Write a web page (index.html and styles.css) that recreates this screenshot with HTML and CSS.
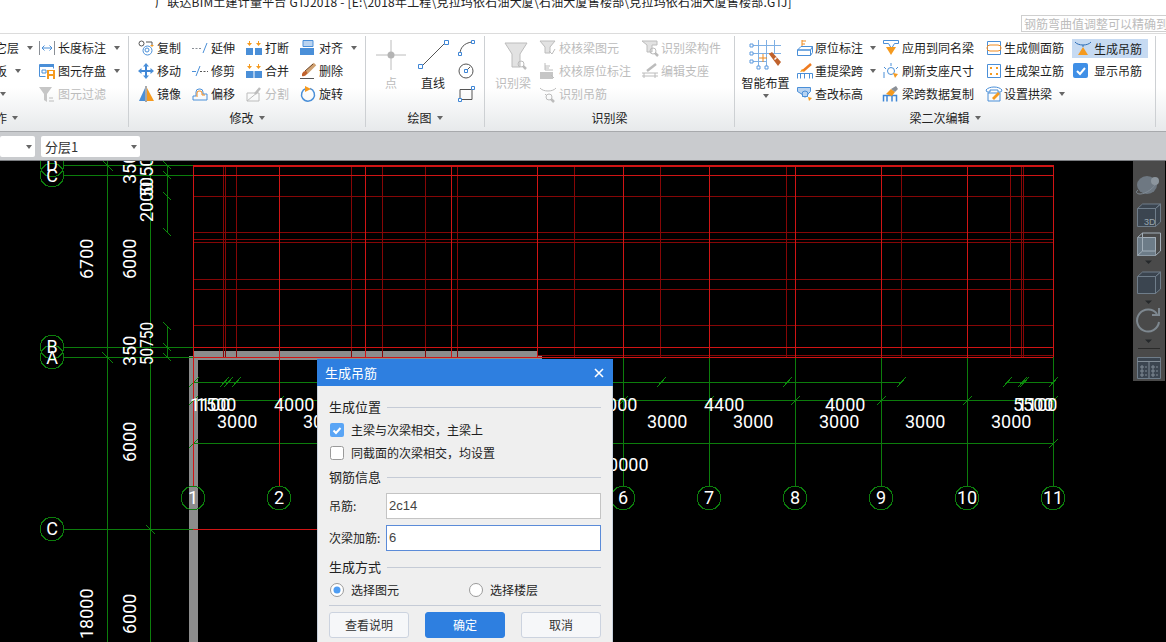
FILE: index.html
```html
<!DOCTYPE html>
<html lang="zh-CN">
<head>
<meta charset="utf-8">
<title>生成吊筋</title>
<link rel="stylesheet" href="styles.css">
</head>
<body>
<div class="app">
  <header class="titlebar">
    <div class="title">广联达BIM土建计量平台 GTJ2018 - [E:\2018年工程\克拉玛依石油大厦\石油大厦售楼部\克拉玛依石油大厦售楼部.GTJ]</div>
    <div class="search">钢筋弯曲值调整可以精确到何</div>
  </header>

  <div class="ribbon">
    <section class="group g0">
      <div class="body">
        <div class="col c0">
          <div class="item"><span>它层</span><i class="dd"></i></div>
          <div class="item"><span>板</span><i class="dd"></i></div>
          <div class="item"><i class="dd first"></i></div>
        </div>
        <div class="col">
          <div class="item"><svg class="ic" viewBox="0 0 16 16"><path class="lg" d="M.5 1v14M15.5 1v14"/><path class="lb" d="M3 8h10M5.5 5.5 3 8l2.500 2.500M10.500 5.500 13 8l-2.500 2.500"/></svg><span>长度标注</span><i class="dd"></i></div>
          <div class="item"><svg class="ic" viewBox="0 0 16 16"><path class="lb" d="M.5 1.500h14v4M.5 1.500v12h6"/><path class="fb" d="M1 1h14v3H1z"/><path class="lb" d="M3 7h4v3H3z"/><path class="fo" d="M8 7h8v9H8z"/><path class="fw" d="M10 8h4v3h-4zM10 13h4v3h-4z"/></svg><span>图元存盘</span><i class="dd"></i></div>
          <div class="item off"><svg class="ic" viewBox="0 0 16 16"><path class="fd" d="M0 1h13L8 8v8L5 14V8z"/><path class="ld" d="M10 12h4M10 15h5"/></svg><span>图元过滤</span></div>
        </div>
      </div>
      <div class="label"><span class="cut">作</span><i class="dd"></i></div>
    </section>

    <section class="group g1">
      <div class="body">
        <div class="col w54">
          <div class="item"><svg class="ic" viewBox="0 0 16 16"><circle class="ln" cx="3.500" cy="3.500" r="2.500"/><circle class="lb" cx="9.500" cy="10.500" r="4.500"/><circle class="lb" cx="9" cy="10" r="2"/><path class="ln" d="M8 2h6v3"/><path class="fo" d="M12 5h4l-2 2z"/></svg><span>复制</span></div>
          <div class="item"><svg class="ic" viewBox="0 0 16 16"><path class="lbb" d="M8 3v10M3 8h10"/><path class="fb" d="M8 0l3 3.500H5zM8 16l-3-3.500h6zM0 8l3.500-3v6zM16 8l-3.500 3V5z"/></svg><span>移动</span></div>
          <div class="item"><svg class="ic" viewBox="0 0 16 16"><path class="fb" d="M7 2v13H1z"/><path class="fo" d="M9 2v13h7z"/><path class="ln" d="M8 0v16"/></svg><span>镜像</span></div>
        </div>
        <div class="col w54">
          <div class="item"><svg class="ic" viewBox="0 0 16 16"><path class="lg dash" d="M0 8.500h9"/><path class="lb" d="M15 3l-4 10"/></svg><span>延伸</span></div>
          <div class="item"><svg class="ic" viewBox="0 0 16 16"><path class="lb" d="M0 8.500h4M8 3 4 13"/><path class="ln dash" d="M8 8.500h8"/></svg><span>修剪</span></div>
          <div class="item"><svg class="ic" viewBox="0 0 16 16"><path class="lb" d="M1 14V10h3V6a3 3 0 0 1 3-3h1a3 3 0 0 1 3 3v2h4v6z"/><path class="lo" d="M5 11V7a2 2 0 0 1 2-2h1a2 2 0 0 1 2 2v2h3"/></svg><span>偏移</span></div>
        </div>
        <div class="col w54">
          <div class="item"><svg class="ic" viewBox="0 0 16 16"><path class="fb" d="M0 8h7v7H0zM9 8h7v7H9z"/><path class="fo" d="M3 1h1v2h2L3.500 6 1 3h2zM12 1h1v2h2l-2.500 3L10 3h2z"/></svg><span>打断</span></div>
          <div class="item"><svg class="ic" viewBox="0 0 16 16"><path class="fb" d="M0 8h7.500v7H0zM8.500 8H16v7H8.500z"/><path class="fo" d="M3 1h1v2h2L3.500 6 1 3h2zM12 1h1v2h2l-2.500 3L10 3h2z"/></svg><span>合并</span></div>
          <div class="item off"><svg class="ic" viewBox="0 0 16 16"><path class="ld" d="M1 7h12v8H1zM1 15 12 6"/><path class="ldw" d="M9 8l5-6"/></svg><span>分割</span></div>
        </div>
        <div class="col">
          <div class="item"><svg class="ic" viewBox="0 0 16 16"><path class="lb fl" d="M3 .5h10v6H3z"/><path class="fb" d="M0 8h14v7H0z"/></svg><span>对齐</span><i class="dd"></i></div>
          <div class="item"><svg class="ic" viewBox="0 0 16 16"><path class="lbr" d="M15 1 6 10"/><path class="lbr2" d="M13 1 5 8"/><path class="fbr" d="M2 11c1-3 4-4 5-2s-2 5-5 4z"/><path class="ln" d="M0 15.500h14"/></svg><span>删除</span></div>
          <div class="item"><svg class="ic" viewBox="0 0 16 16"><path class="lbt" d="M6 2.500a6.500 6.500 0 1 0 4 0"/><path class="fo" d="M5 0l6 3-6 3z"/></svg><span>旋转</span></div>
        </div>
      </div>
      <div class="label"><span>修改</span><i class="dd"></i></div>
    </section>

    <section class="group g2">
      <div class="body">
        <div class="big b30 off">
          <svg class="ic30" viewBox="0 0 30 30"><path class="ld" d="M0 15h30M15 0v30"/><circle class="fd2" cx="15" cy="15" r="3.500"/></svg>
          <span>点</span>
        </div>
        <div class="big b30 m12">
          <svg class="ic30" viewBox="0 0 30 30"><path class="ln" d="M3 27 27 3"/><path class="sq" d="M.5 24.500h4v4h-4zM26.500 .5h4v4h-4z"/></svg>
          <span>直线</span>
        </div>
        <div class="col m10">
          <div class="item"><svg class="ic" viewBox="0 0 16 16"><path class="ln" d="M2 14C2 8 6 3 14 2"/><path class="sq" d="M.5 12.500h3v3h-3zM13.500 .5h3v3h-3z"/></svg></div>
          <div class="item"><svg class="ic" viewBox="0 0 16 16"><circle class="ln" cx="8" cy="8" r="7"/><path class="ln" d="M8 8l4-4"/><path class="sq" d="M6.500 6.500h3v3h-3z"/></svg></div>
          <div class="item"><svg class="ic" viewBox="0 0 16 16"><path class="ln" d="M2 3.500h12v10H2z"/><path class="sq" d="M.5 12.500h3v3h-3zM13.500 .5h3v3h-3z"/></svg></div>
        </div>
      </div>
      <div class="label"><span>绘图</span><i class="dd"></i></div>
    </section>

    <section class="group g3">
      <div class="body off">
        <div class="big b36">
          <svg class="ic30" viewBox="0 0 30 30"><path class="ld fh" d="M7 3h22l-7 11v13H14V14z"/><circle class="ld" cx="23" cy="24" r="3"/><path class="ldw" d="M25 26l3 3"/></svg>
          <span>识别梁</span>
        </div>
        <div class="col w102 m9">
          <div class="item"><svg class="ic" viewBox="0 0 16 16"><path class="ld fh" d="M0 1h15l-5 6v6H5V7z"/><path class="ld" d="M9 11l3 3 3-5"/></svg><span>校核梁图元</span></div>
          <div class="item"><svg class="ic" viewBox="0 0 16 16"><path class="ld" d="M5 0v7h8M5 3h5M5 5h4"/><path class="fd" d="M0 9h13v7H0z"/><path class="ld" d="M11 12l3 3"/></svg><span>校核原位标注</span></div>
          <div class="item"><svg class="ic" viewBox="0 0 16 16"><path class="ld" d="M0 2c3 4 13 4 16 0M5 8l2 2"/><circle class="ld" cx="9" cy="11" r="3"/><path class="ldw" d="M11 13l3 3"/></svg><span>识别吊筋</span></div>
        </div>
        <div class="col">
          <div class="item"><svg class="ic" viewBox="0 0 16 16"><path class="ld fh" d="M0 1h15v4h-5v7H5V5z"/><circle class="ld" cx="11" cy="11" r="3"/><path class="ldw" d="M13 13l3 3"/></svg><span>识别梁构件</span></div>
          <div class="item"><svg class="ic" viewBox="0 0 16 16"><path class="ldw" d="M5 8l9-7"/><path class="ld" d="M0 10h16M2 15v-5M13 15v-5M0 13h16"/></svg><span>编辑支座</span></div>
        </div>
      </div>
      <div class="label plain"><span>识别梁</span></div>
    </section>

    <section class="group g4">
      <div class="body">
        <div class="big b49">
          <svg class="ic30" viewBox="0 0 30 30"><path class="lbl" d="M0 5.500h30M0 13.500h30M0 21.500h16M7.500 0v29M15.500 0v29M23.500 0v14"/><path class="lbf" d="M-1 4h3v3h-3zM-1 12h3v3h-3zM-1 20h3v3h-3zM6 26h3v3H6zM14 26h3v3h-3z"/><path class="lo" d="M8 18h8M12 14v8M18 13l2 2"/><path class="fbr" d="M18 14l3-2 9 10-3 4z"/><path class="fw" d="M23 19l2-2 1 1-2 2z"/></svg>
          <span>智能布置</span>
          <i class="dd solo"></i>
        </div>
        <div class="col w86 m7 gap2">
          <div class="item"><svg class="ic" viewBox="0 0 16 16"><path class="lo" d="M5 0v6M5 1h4M5 4h3"/><path class="lb" d="M.5 10 4 6.500h11.500l-2 3.500zM.5 10h13v5.500H.5zM13.500 15.500l2-3V6.500"/></svg><span>原位标注</span><i class="dd"></i></div>
          <div class="item"><svg class="ic" viewBox="0 0 16 16"><path class="lob" d="M14 1 6 8"/><path class="lb" d="M.5 15.500v-5h15v5M3.500 15.500v-5M7.500 15.500v-5M12.500 15.500v-5"/><path class="fo" d="M3 9l2-3 3 2z"/></svg><span>重提梁跨</span><i class="dd"></i></div>
          <div class="item"><svg class="ic" viewBox="0 0 16 16"><path class="lb fl" d="M.5 1.500h13v4l-3 3v2h-5v-2l-5-3z"/><circle class="lb" cx="8" cy="8" r="3"/><path class="fo" d="M11 11l4 1-3 3z"/></svg><span>查改标高</span></div>
        </div>
        <div class="col w103">
          <div class="item"><svg class="ic" viewBox="0 0 16 16"><path class="lb" d="M.5 .5h15v3h-4l-3 5-3-5h-5z"/><path class="fo" d="M3 7h10l-5 8z"/></svg><span>应用到同名梁</span></div>
          <div class="item"><svg class="ic" viewBox="0 0 16 16"><circle class="lb" cx="8" cy="8" r="3.500"/><path class="lb" d="M8 0v3M1 4l2 2M15 4l-2 2M1 9v6"/><path class="fo" d="M10 10l5 1-3 4z"/></svg><span>刷新支座尺寸</span></div>
          <div class="item"><svg class="ic" viewBox="0 0 16 16"><path class="lbw" d="M.5 15.500v-6h13v6M4 15.500v-6M9 15.500v-6"/><path class="fo" d="M3 8l5-5 4 3-3 4z"/><path class="fg" d="M8 3l5-3 2 3-3 3z"/></svg><span>梁跨数据复制</span></div>
        </div>
        <div class="col w86 gap2">
          <div class="item"><svg class="ic" viewBox="0 0 16 16"><path class="lb" d="M1.500 1.500h13v13h-13z"/><path class="lo" d="M4 5h8M4 11h8M4 5a3 3 0 0 0 0 6M12 5a3 3 0 0 1 0 6"/></svg><span>生成侧面筋</span></div>
          <div class="item"><svg class="ic" viewBox="0 0 16 16"><path class="lb" d="M1.500 1.500h13v13h-13z"/><path class="fo" d="M4 4h2v2H4zM10 4h2v2h-2zM4 10h2v2H4zM10 10h2v2h-2z"/></svg><span>生成架立筋</span></div>
          <div class="item"><svg class="ic" viewBox="0 0 16 16"><path class="lb" d="M0 4c3-4 13-4 16 0l-1 2h-3V4H4v2H1zM2 7h12v8H2z"/><path class="fo" d="M6 12l6-6 2 2-6 6z"/></svg><span>设置拱梁</span><i class="dd"></i></div>
        </div>
        <div class="col">
          <div class="item hl"><svg class="ic" viewBox="0 0 16 16"><path class="lbd" d="M0 1c3 4 13 4 16 0"/><path class="fo" d="M3 14h10l-5-8z"/><path class="lbd" d="M8 4v2"/></svg><span>生成吊筋</span></div>
          <div class="item chk"><svg class="ic" viewBox="0 0 16 16"><rect class="fb2" width="15" height="15" rx="2"/><path class="tick" d="M4 8l3 3 5-6"/></svg><span>显示吊筋</span></div>
        </div>
      </div>
      <div class="label"><span>梁二次编辑</span><i class="dd"></i></div>
    </section>
  </div>

  <div class="subbar">
    <div class="select s1"><i class="dd"></i></div>
    <div class="select s2"><span>分层1</span><i class="dd"></i></div>
  </div>

  <main class="canvas">
    <svg class="cad" viewBox="0 161 1166 481" aria-hidden="false">
      <defs>
        <polygon id="axis" points="12,0 10.400,6 6,10.400 0,12 -6,10.400 -10.400,6 -12,0 -10.400,-6 -6,-10.400 0,-12 6,-10.400 10.400,-6"/>
      </defs>
      <path class="wall" d="M193 351h344v5h5v4H198v282h-9V356h4z"/>
      <path class="gr" d="M64 165.500h129M64 175.500h129M64 347.500h129M64 357.500h129M64 529.500h129M107.500 161v481M150.500 161v481M167.500 165v67M167.500 326v31M193 382.500h709M1007 382.500h46M193 400.500h860M193 443.500h860M623.500 357v129M709.500 357v129M795.500 357v129M881.500 357v129M967.500 357v129M1053.500 357v129"/>
      <path class="tk" d="M102 160l11 11M102 352l11 11M146 525l9 9M163 161l8 8M163 171l8 8M163 192l8 8M163 228l8 8M163 322l8 8M163 343l8 8M163 353l8 8M189 387l10-10M220 387l9-10M224 387l9-10M232 387l9-10M189 405l9-9M275 405l9-9M619 405l9-9M705 405l9-9M791 405l9-9M877 405l9-9M963 405l9-9M1049 405l9-9M189 448l9-9M1049 448l9-9M657 387l9-10M783 387l9-10M897 387l9-10M1003 387l9-10M1018 387l9-10M1020 387l9-10M1049 387l9-10"/>
      <path class="rd2" d="M193 196.500h860M193 232.500h860M193 239.500h860M193 242.500h860M193 279.500h860M193 289.500h860M193 325.500h860M537 355.500h516M223.500 165v192M225.500 165v192M236.500 165v192M351.500 165v192M382.500 165v192M425.500 165v192M457.500 165v192M574.500 165v192M660.500 165v192M786.500 165v192M901.500 165v192M1010.500 165v192M1021.500 165v192M1023.500 165v192"/>
      <path class="rd" d="M193 165.500h860M193 166.500h860M193 175.500h860M193 347.500h860M193 357.500h860M193.500 165v321M279.500 165v321M365.500 165v192M451.500 165v192M537.500 165v192M623.500 165v192M709.500 165v192M795.500 165v192M881.500 165v192M967.500 165v192M1053.500 165v192M193 529.500h125"/>
      <g class="cg">
        <use href="#axis" x="52" y="165"/><use href="#axis" x="52" y="175"/>
        <use href="#axis" x="52" y="347"/><use href="#axis" x="52" y="357"/>
        <use href="#axis" x="52" y="529"/>
        <use href="#axis" x="193" y="498"/><use href="#axis" x="279" y="498"/>
        <use href="#axis" x="623" y="498"/><use href="#axis" x="709" y="498"/><use href="#axis" x="795" y="498"/>
        <use href="#axis" x="881" y="498"/><use href="#axis" x="967" y="498"/><use href="#axis" x="1053" y="498"/>
      </g>
      <g class="mark">
        <text x="52" y="171">D</text><text x="52" y="182">C</text>
        <text x="52" y="353">B</text><text x="52" y="364">A</text>
        <text x="52" y="535">C</text>
        <text x="193" y="504">1</text><text x="279" y="504">2</text><text x="623" y="504">6</text>
        <text x="709" y="504">7</text><text x="795" y="504">8</text><text x="881" y="504">9</text>
        <text x="967" y="504">10</text><text x="1053" y="504">11</text>
      </g>
      <g class="dim">
        <text x="190" y="411">1100</text><text x="196" y="411">1500</text><text x="274" y="411">4000</text>
        <text x="597" y="411">4000</text><text x="704" y="411">4400</text><text x="825" y="411">4000</text>
        <text x="1013" y="411">5500</text><text x="1017" y="411">1100</text>
        <text x="217" y="428">3000</text><text x="303" y="428">3000</text><text x="647" y="428">3000</text>
        <text x="733" y="428">3000</text><text x="819" y="428">3000</text><text x="905" y="428">3000</text><text x="991" y="428">3000</text>
        <text x="598" y="471">30000</text>
      </g>
      <g class="dim">
        <text transform="translate(93 279) rotate(-90)">6700</text>
        <text transform="translate(136 279) rotate(-90)">6000</text>
        <text transform="translate(136 184) rotate(-90)">350</text>
        <text transform="translate(153 222) rotate(-90)">2000</text>
        <text transform="translate(153 197) rotate(-90)">5050</text>
        <text transform="translate(136 366) rotate(-90)">350</text>
        <text transform="translate(153 365) rotate(-90)" textLength="43" lengthAdjust="spacingAndGlyphs">50750</text>
        <text transform="translate(136 462) rotate(-90)">6000</text>
        <text transform="translate(93 639) rotate(-90)">18000</text>
        <text transform="translate(136 634) rotate(-90)">6000</text>
      </g>
    </svg>

    <aside class="viewbar">
      <svg class="viewicons" viewBox="1133 161 32 220">
        <ellipse class="ph" cx="1147" cy="185" rx="10" ry="9"/>
        <path class="ps" d="M1138 190c-3 2-1 4 2 4 6 0 14-6 18-13"/>
        <circle class="ph2" cx="1155" cy="181" r="4"/>
        <path class="pf" d="M1137.500 208.500h18v18h-18zM1137.500 208.500l5-4.500h18l-5 4.500zM1155.500 208.500l5-4.500v18l-5 4.500z"/>
        <text class="p3d" x="1144" y="225">3D</text>
        <path class="pm" d="M1137.500 237.500h18v18h-18z"/>
        <path class="pl" d="M1142.500 237.500h13v13.500h-13zM1137.500 237.500l5-4.500h18v18l-5 4.500M1142.500 233v4M1142.500 251l-5 4.500"/>
        <path class="pa" d="M1145 260.500h7l-3.500 3.500z"/>
        <path class="pf" d="M1137.500 276.500h18v17h-18zM1137.500 276.500l5-4.500h18l-5 4.500zM1155.500 276.500l5-4.500v17l-5 4.500z"/>
        <path class="pa" d="M1145 300.500h7l-3.500 3.500z"/>
        <path class="ps2" d="M1157 314a11 11 0 1 0 2 8M1152 315h7v-7"/>
        <path class="pa" d="M1145 339.500h7l-3.500 3.500z"/>
        <path class="sep" d="M1138 348.500h22"/>
        <path class="pf" d="M1137.500 357.500h23v21h-23z"/>
        <path class="ps" d="M1137.500 361.500h23M1149 362v16M1141 366h2v2h-2zM1145 367h2M1141 370h2v2h-2zM1145 371h2M1141 374h2v2h-2zM1145 375h2M1152 366h2v2h-2zM1156 367h2M1152 370h2v2h-2zM1156 371h2M1152 374h2v2h-2zM1156 375h2"/>
      </svg>
    </aside>
  </main>

  <div class="dialog">
    <div class="dlg-head"><span>生成吊筋</span><svg class="close" viewBox="0 0 10 10"><path d="M1 1l8 8M9 1l-8 8"/></svg></div>
    <div class="dlg-body">
      <div class="legend"><span>生成位置</span><i></i></div>
      <div class="opt"><svg class="box" viewBox="0 0 14 14"><rect class="boxon" width="14" height="14" rx="2"/><path class="tick" d="M3.500 7.500l2.500 2.500 4.500-5"/></svg><span>主梁与次梁相交，主梁上</span></div>
      <div class="opt"><svg class="box" viewBox="0 0 14 14"><rect class="boxoff" x=".5" y=".5" width="13" height="13" rx="2"/></svg><span>同截面的次梁相交，均设置</span></div>
      <div class="legend l2"><span>钢筋信息</span><i></i></div>
      <div class="field"><label>吊筋:</label><div class="input">2c14</div></div>
      <div class="field"><label>次梁加筋:</label><div class="input focus">6</div></div>
      <div class="legend l3"><span>生成方式</span><i></i></div>
      <div class="radios">
        <div class="radio r1"><svg class="box" viewBox="0 0 14 14"><circle class="boxoff" cx="7" cy="7" r="6.500"/><circle class="dot" cx="7" cy="7" r="3.500"/></svg><span>选择图元</span></div>
        <div class="radio"><svg class="box" viewBox="0 0 14 14"><circle class="boxoff" cx="7" cy="7" r="6.500"/></svg><span>选择楼层</span></div>
      </div>
      <div class="rule"></div>
      <div class="buttons">
        <div class="btn">查看说明</div>
        <div class="btn primary">确定</div>
        <div class="btn">取消</div>
      </div>
    </div>
  </div>
</div>
</body>
</html>
```

FILE: styles.css
```css
* { box-sizing: border-box; }
html, body { margin: 0; padding: 0; background: #000; overflow: hidden; }
body, .app { width: 1166px; height: 642px; }
.app {
  position: relative;
  display: flex;
  flex-direction: column;
  overflow: hidden;
  font: 12px/16px "Noto Sans CJK SC", "Noto Sans", sans-serif;
  color: #1e1e1e;
}

/* title */
.titlebar { height: 33px; background: #fff; position: relative; flex: none; }
.title { padding-left: 155px; margin-top: -6px; line-height: 16px; white-space: nowrap; color: #222; letter-spacing: .2px; }
.search {
  position: absolute; left: 1021px; top: 15px; width: 160px; height: 17px;
  border: 1px solid #cfcfcf; color: #bcbcbc; padding-left: 2px; line-height: 15px; white-space: nowrap;
}

/* ribbon */
.ribbon {
  flex: none; height: 98px; display: flex;
  border-top: 1px solid #dcdcdc;
  background: linear-gradient(#fff 0, #fff 55%, #e7e9eb 100%);
}
.group { height: 91px; margin-top: 2px; border-right: 1px solid #cdd0d3; flex: none; display: flex; flex-direction: column; }
.g0 { width: 129px; }
.g1 { width: 237px; }
.g2 { width: 119px; }
.g3 { width: 250px; }
.g4 { width: 421px; }
.body { height: 70px; display: flex; }
.g1 .body { padding-left: 9px; }
.g2 .body { padding-left: 10px; }
.g3 .body { padding-left: 10px; }
.g4 .body { padding-left: 6px; }
.label { flex: 1; padding-top: 3px; display: flex; justify-content: center; align-items: center; height: 21px; color: #222; }
.g0 .label { justify-content: flex-start; margin-left: -5px; }
.col { display: grid; grid-template-rows: repeat(3, 23px); flex: none; }
.c0 { margin-left: -5px; width: 44px; }
.w54 { width: 54px; }
.w86 { width: 86px; }
.w102 { width: 102px; }
.w103 { width: 103px; }
.m7 { margin-left: 7px; }
.m9 { margin-left: 9px; }
.m10 { margin-left: 10px; }
.m12 { margin-left: 12px; }
.item { display: flex; align-items: center; gap: 3px; white-space: nowrap; height: 23px; }
.gap2 .item { gap: 2px; }
.off, .off .item { color: #bcbcbc; }
.ic { width: 16px; height: 16px; flex: none; overflow: visible; }
.ic30 { width: 30px; height: 30px; flex: none; overflow: visible; }
.big { display: flex; flex-direction: column; align-items: center; padding-top: 4px; flex: none; white-space: nowrap; }
.big span { margin-top: 5px; }
.b30 { width: 30px; }
.b36 { width: 36px; }
.b49 { width: 49px; }
.hl { background: #c6daf2; height: 19px; margin-top: 3px; width: 76px; padding-left: 3px; }
.chk { padding-left: 1px; gap: 5px; }
.dd {
  display: inline-block; width: 0; height: 0; flex: none; margin-left: 5px;
  border-top: 4px solid #666; border-left: 3.500px solid transparent; border-right: 3.500px solid transparent;
}
.dd.first { margin-left: 6px; }
.dd.solo { margin: 3px 0 0; }
.item .dd { margin-left: 5px; }

/* icon paints */
.ln, .lb, .lg, .lo, .ld, .ldw, .lbb, .lbr, .lbr2, .lbt, .lob, .lbw, .lbd, .lbl, .sq, .tick { fill: none; stroke-width: 1; }
.ln { stroke: #555; }
.lb { stroke: #4a8fd8; }
.lbb { stroke: #3f86d6; stroke-width: 2; }
.lbl { stroke: #7fb0e4; }
.lbf { fill: #fff; stroke: #5c9adf; stroke-width: 1; }
.lbd { stroke: #2f6eb5; }
.lbw { stroke: #3f86d6; stroke-width: 1.500; }
.lg { stroke: #8a8f96; }
.lo { stroke: #ef8a1f; }
.lob { stroke: #ef7a1f; stroke-width: 2.500; }
.ld { stroke: #bcbcbc; }
.ldw { stroke: #bcbcbc; stroke-width: 2.500; }
.lbr { stroke: #cfa070; stroke-width: 3.500; }
.lbr2 { stroke: #6a4020; }
.lbt { stroke: #4a8fd8; stroke-width: 1.500; }
.sq { stroke: #3f86d6; fill: #fff; }
.fb { fill: #4a8fd8; }
.fb2 { fill: #3f8fe6; }
.fo { fill: #f59a1f; }
.fw { fill: #fff; }
.fd { fill: #c6c6c6; }
.fd2 { fill: #b4b4b4; }
.fg { fill: #8a8f96; }
.fbr { fill: #c0622d; }
.fl { fill: #b9d3f0; }
.fh { fill: #e2e2e2; }
.dash { stroke-dasharray: 2 1.500; }
.tick { stroke: #fff; stroke-width: 2; }

/* sub toolbar */
.subbar {
  flex: none; height: 30px; background: #c9cbce; display: flex; gap: 6px; align-items: flex-start;
  padding-top: 4px; border-top: 1px solid #a7a9ac; border-bottom: 1px solid #7a7c80;
}
.select {
  height: 21px; background: #fff; border-radius: 2px; display: flex; align-items: center;
  justify-content: space-between; padding: 0 3px 0 4px; font-size: 13px; color: #333;
}
.s1 { width: 35px; justify-content: flex-end; }
.s2 { width: 99px; }

/* canvas */
.canvas { position: relative; flex: 1; background: #000; }
.cad { display: block; width: 1166px; height: 481px; }
.wall { fill: #8c8c8c; }
.gr, .tk, .rd, .rd2 { fill: none; stroke-width: 1; shape-rendering: crispEdges; }
.gr { stroke: #0c7d0c; }
.tk { stroke: #0c8a0c; }
.rd { stroke: #d01414; }
.rd2 { stroke: #860606; }
.cg use { fill: none; stroke: #0c7d0c; stroke-width: 1; shape-rendering: crispEdges; }
.dim text, .mark text { fill: #fff; font-family: Roboto, "Liberation Sans", sans-serif; font-weight: 400; }
.dim text { font-size: 18px; }
.mark text { font-size: 18px; text-anchor: middle; }
.viewbar { position: absolute; left: 1133px; top: 0; width: 32px; height: 220px; background: #4a4a4a; }
.viewicons { display: block; width: 32px; height: 220px; }
.pf { fill: #3b4550; stroke: #6f7d8a; stroke-width: 1; }
.pm { fill: #6d7c88; stroke: #8f9ca7; stroke-width: 1; }
.pl { fill: none; stroke: #a3afb9; stroke-width: 1; }
.ph { fill: #6e7882; }
.ph2 { fill: #8c959d; }
.ps { fill: none; stroke: #818c96; stroke-width: 1; }
.ps2 { fill: none; stroke: #7e8890; stroke-width: 2; }
.pa { fill: #25282b; }
.sep { stroke: #2a2a2a; stroke-width: 1; }
.p3d { fill: #9aa5ae; font: 9px "Liberation Sans", sans-serif; }

/* dialog */
.dialog {
  position: absolute; left: 317px; top: 359px; width: 296px; height: 300px;
  background: #efefef; border: 1px solid #c8d0dc; border-top: 0;
}
.dlg-head {
  height: 27px; margin: 0 -1px; background: #2e7fe0; color: #fff; font-size: 13px;
  display: flex; align-items: center; justify-content: space-between; padding: 0 9px 0 8px;
}
.close { width: 10px; height: 10px; }
.close path { stroke: #fff; stroke-width: 1.600; fill: none; }
.dlg-body { padding: 12px 11px 0; }
.legend { display: flex; align-items: center; gap: 6px; font-size: 13px; height: 18px; color: #222; }
.legend i { flex: 1; height: 1px; background: #c5cbd6; }
.opt { display: flex; align-items: center; gap: 7px; height: 23px; padding-left: 1px; }
.legend + .opt { margin-top: 2px; }
.l2 { margin-top: 4px; }
.l3 { margin-top: 7px; }
.box { width: 14px; height: 14px; flex: none; }
.boxon { fill: #5aa5f5; }
.boxoff { fill: #fff; stroke: #9a9a9a; }
.dot { fill: #4f9df2; }
.field { display: flex; align-items: center; height: 26px; margin-top: 6px; }
.l2 + .field { margin-top: 7px; }
.field label { width: 57px; flex: none; white-space: nowrap; }
.input { flex: 1; height: 26px; background: #fff; border: 1px solid #c4c4c4; padding-left: 2px; font: 13px/24px "Liberation Sans", sans-serif; color: #444; }
.input.focus { border-color: #5b8bd8; }
.radios { display: flex; margin-top: 6px; padding-left: 1px; }
.radio { display: flex; align-items: center; gap: 7px; height: 16px; }
.r1 { width: 139px; }
.rule { height: 1px; background: #c5cbd6; margin-top: 7px; }
.buttons { display: flex; gap: 16px; margin-top: 6px; }
.btn {
  width: 80px; height: 26px; border: 1px solid #ccd3df; border-radius: 3px; background: #f6f7f9;
  text-align: center; line-height: 24px; color: #333;
}
.btn.primary { background: #2e7fe0; border-color: #2e7fe0; color: #fff; }
```
